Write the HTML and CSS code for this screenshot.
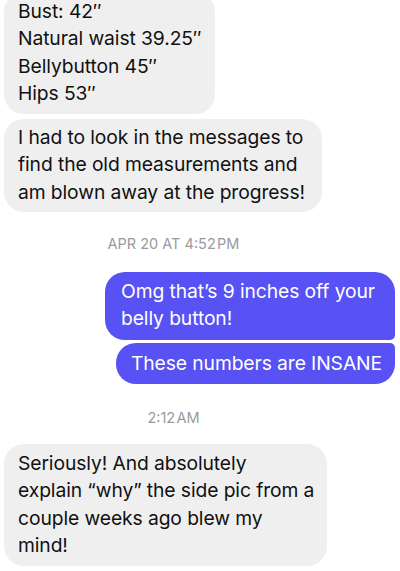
FILE: index.html
```html
<!DOCTYPE html>
<html lang="en">
<head>
  <meta charset="UTF-8" />
  <meta name="viewport" content="width=device-width, initial-scale=1.0" />
  <title>Messages</title>
  <link rel="stylesheet" href="styles.css">
</head>
<body>
  <div class="thread">
    <div class="bubble in first">Bust: 42″<br>Natural waist 39.25″<br>Bellybutton 45″<br>Hips 53″</div>
    <div class="bubble in second">I had to look in the messages to find the old measurements and am blown away at the progress!</div>

    <div class="stamp">APR 20 AT 4:52&#8202;PM</div>

    <div class="bubble out top">Omg that’s 9 inches off your belly button!</div>
    <div class="bubble out bottom">These numbers are INSANE</div>

    <div class="stamp late">2:12&#8202;AM</div>

    <div class="bubble in last">Seriously! And absolutely explain “why” the side pic from a couple weeks ago blew my mind!</div>
  </div>
</body>
</html>
```

FILE: styles.css
```css
* {
  box-sizing: border-box;
}
body {
  margin: 0;
  background: #ffffff;
  font-family: Inter, "Noto Sans", sans-serif;
  overflow: hidden;
}
.thread {
  display: flex;
  flex-direction: column;
  padding: 0 5px 0 4px;
  margin-top: -8px;
}
.bubble {
  font-size: 19.3px;
  line-height: 27.3px;
  padding: 6px 12px 7px 14px;
  border-radius: 20px;
  letter-spacing: -0.1px;
}
.in {
  align-self: flex-start;
  background: #efeff0;
  color: #111111;
  margin-bottom: 5px;
}
.first {
  width: 211px;
}
.second {
  width: 318px;
  padding-top: 5px;
  padding-bottom: 6px;
}
.last {
  width: 323px;
}
.out {
  align-self: flex-end;
  background: #5851f4;
  color: #ffffff;
  padding-left: 16px;
}
.out.top {
  width: 290px;
  border-bottom-right-radius: 5px;
}
.out.bottom {
  white-space: nowrap;
  padding: 7px 13px 7px 15px;
  margin-top: 3px;
  border-top-right-radius: 5px;
}
.stamp {
  align-self: center;
  font-size: 14.5px;
  line-height: 17px;
  color: #9a9a9e;
  margin: 18px 0 20px 0;
  padding-right: 52px;
}
.stamp.late {
  margin: 25px 0 18px 0;
}
```
